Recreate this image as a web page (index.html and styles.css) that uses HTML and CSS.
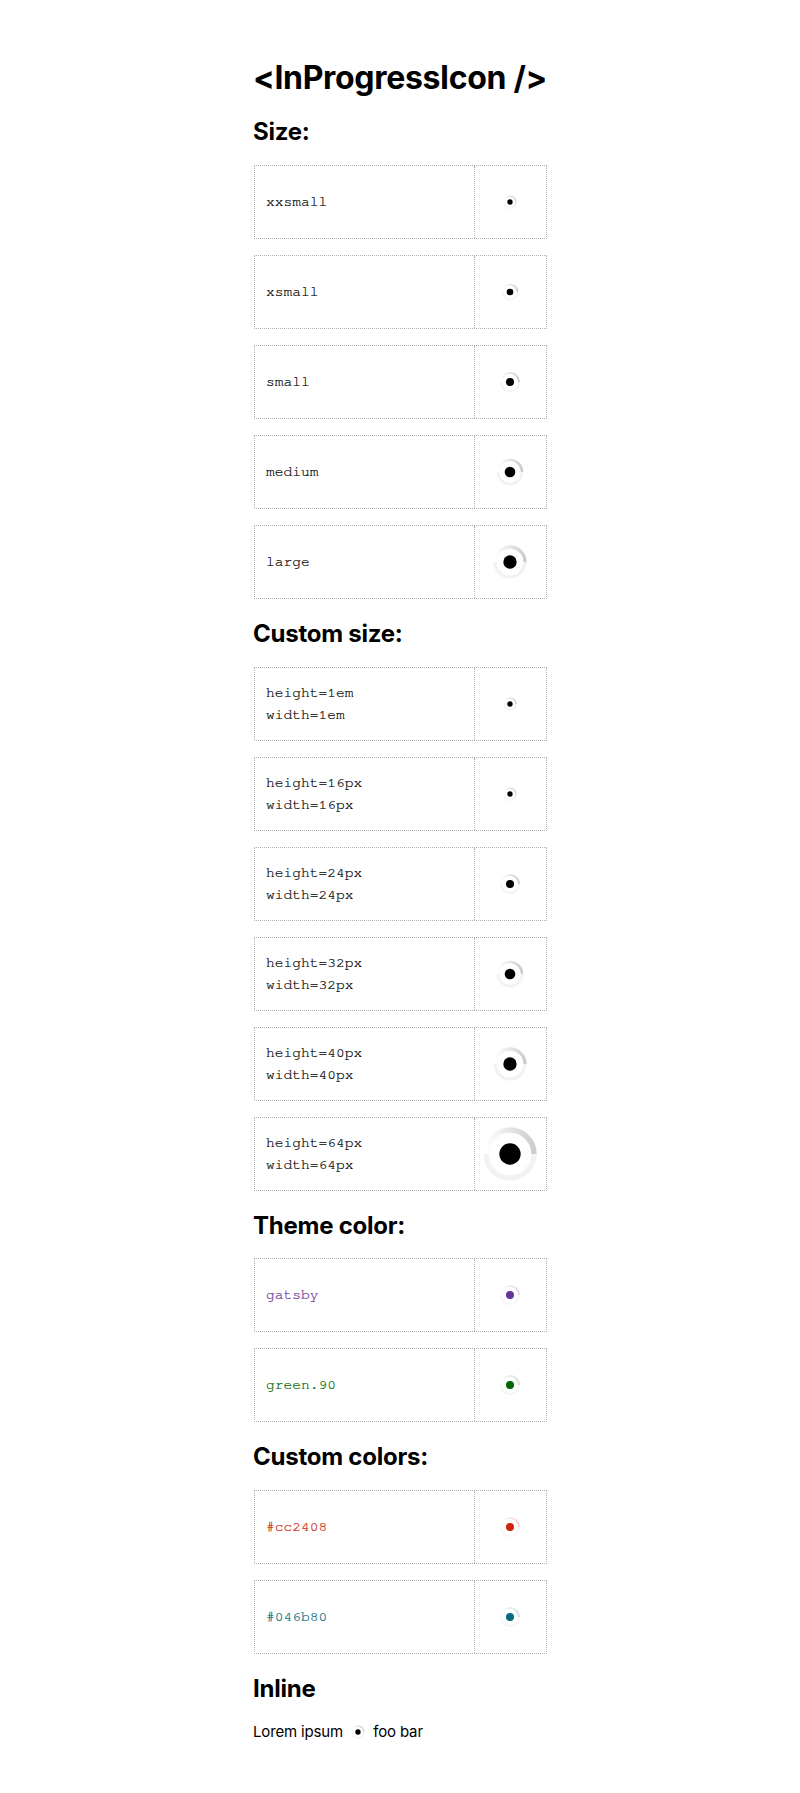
FILE: index.html
```html
<!DOCTYPE html>
<html lang="en">
<head>
<meta charset="utf-8">
<title>InProgressIcon</title>
<link rel="stylesheet" href="styles.css">
</head>
<body>
<svg class="defs" width="0" height="0" aria-hidden="true">
  <defs>
    <linearGradient id="g-black" x1="0" x2="1" y1="0" y2="0"><stop offset="0" stop-color="#000" stop-opacity="0"/><stop offset="1" stop-color="#000" stop-opacity=".2"/></linearGradient>
    <linearGradient id="g-purple" x1="0" x2="1" y1="0" y2="0"><stop offset="0" stop-color="#663399" stop-opacity="0"/><stop offset="1" stop-color="#663399" stop-opacity=".2"/></linearGradient>
    <linearGradient id="g-green" x1="0" x2="1" y1="0" y2="0"><stop offset="0" stop-color="#006500" stop-opacity="0"/><stop offset="1" stop-color="#006500" stop-opacity=".2"/></linearGradient>
    <linearGradient id="g-red" x1="0" x2="1" y1="0" y2="0"><stop offset="0" stop-color="#cc2408" stop-opacity="0"/><stop offset="1" stop-color="#cc2408" stop-opacity=".2"/></linearGradient>
    <linearGradient id="g-blue" x1="0" x2="1" y1="0" y2="0"><stop offset="0" stop-color="#046b80" stop-opacity="0"/><stop offset="1" stop-color="#046b80" stop-opacity=".2"/></linearGradient>
  </defs>
</svg>
<main class="page">
  <h1 class="title">&lt;InProgressIcon /&gt;</h1>

  <h2 class="section">Size:</h2>
  <div class="row"><div class="label">xxsmall</div><div class="cell"><svg class="icon s16" viewBox="0 0 24 24"><path class="low" d="M21 12a9 9 0 0 1-18 0"/><path class="high" stroke="url(#g-black)" d="M3 12a9 9 0 0 1 18 0"/><circle class="dot" cx="12" cy="12" r="4"/></svg></div></div>
  <div class="row"><div class="label">xsmall</div><div class="cell"><svg class="icon s20" viewBox="0 0 24 24"><path class="low" d="M21 12a9 9 0 0 1-18 0"/><path class="high" stroke="url(#g-black)" d="M3 12a9 9 0 0 1 18 0"/><circle class="dot" cx="12" cy="12" r="4"/></svg></div></div>
  <div class="row"><div class="label">small</div><div class="cell"><svg class="icon s24" viewBox="0 0 24 24"><path class="low" d="M21 12a9 9 0 0 1-18 0"/><path class="high" stroke="url(#g-black)" d="M3 12a9 9 0 0 1 18 0"/><circle class="dot" cx="12" cy="12" r="4"/></svg></div></div>
  <div class="row"><div class="label">medium</div><div class="cell"><svg class="icon s32" viewBox="0 0 24 24"><path class="low" d="M21 12a9 9 0 0 1-18 0"/><path class="high" stroke="url(#g-black)" d="M3 12a9 9 0 0 1 18 0"/><circle class="dot" cx="12" cy="12" r="4"/></svg></div></div>
  <div class="row"><div class="label">large</div><div class="cell"><svg class="icon s40" viewBox="0 0 24 24"><path class="low" d="M21 12a9 9 0 0 1-18 0"/><path class="high" stroke="url(#g-black)" d="M3 12a9 9 0 0 1 18 0"/><circle class="dot" cx="12" cy="12" r="4"/></svg></div></div>

  <h2 class="section">Custom size:</h2>
  <div class="row"><div class="label">height=1em<br>width=1em</div><div class="cell"><svg class="icon s16" viewBox="0 0 24 24"><path class="low" d="M21 12a9 9 0 0 1-18 0"/><path class="high" stroke="url(#g-black)" d="M3 12a9 9 0 0 1 18 0"/><circle class="dot" cx="12" cy="12" r="4"/></svg></div></div>
  <div class="row"><div class="label">height=16px<br>width=16px</div><div class="cell"><svg class="icon s16" viewBox="0 0 24 24"><path class="low" d="M21 12a9 9 0 0 1-18 0"/><path class="high" stroke="url(#g-black)" d="M3 12a9 9 0 0 1 18 0"/><circle class="dot" cx="12" cy="12" r="4"/></svg></div></div>
  <div class="row"><div class="label">height=24px<br>width=24px</div><div class="cell"><svg class="icon s24" viewBox="0 0 24 24"><path class="low" d="M21 12a9 9 0 0 1-18 0"/><path class="high" stroke="url(#g-black)" d="M3 12a9 9 0 0 1 18 0"/><circle class="dot" cx="12" cy="12" r="4"/></svg></div></div>
  <div class="row"><div class="label">height=32px<br>width=32px</div><div class="cell"><svg class="icon s32" viewBox="0 0 24 24"><path class="low" d="M21 12a9 9 0 0 1-18 0"/><path class="high" stroke="url(#g-black)" d="M3 12a9 9 0 0 1 18 0"/><circle class="dot" cx="12" cy="12" r="4"/></svg></div></div>
  <div class="row"><div class="label">height=40px<br>width=40px</div><div class="cell"><svg class="icon s40" viewBox="0 0 24 24"><path class="low" d="M21 12a9 9 0 0 1-18 0"/><path class="high" stroke="url(#g-black)" d="M3 12a9 9 0 0 1 18 0"/><circle class="dot" cx="12" cy="12" r="4"/></svg></div></div>
  <div class="row"><div class="label">height=64px<br>width=64px</div><div class="cell"><svg class="icon s64" viewBox="0 0 24 24"><path class="low" d="M21 12a9 9 0 0 1-18 0"/><path class="high" stroke="url(#g-black)" d="M3 12a9 9 0 0 1 18 0"/><circle class="dot" cx="12" cy="12" r="4"/></svg></div></div>

  <h2 class="section">Theme color:</h2>
  <div class="row c-purple"><div class="label">gatsby</div><div class="cell"><svg class="icon s24" viewBox="0 0 24 24"><path class="low" d="M21 12a9 9 0 0 1-18 0"/><path class="high" stroke="url(#g-purple)" d="M3 12a9 9 0 0 1 18 0"/><circle class="dot" cx="12" cy="12" r="4"/></svg></div></div>
  <div class="row c-green"><div class="label">green.90</div><div class="cell"><svg class="icon s24" viewBox="0 0 24 24"><path class="low" d="M21 12a9 9 0 0 1-18 0"/><path class="high" stroke="url(#g-green)" d="M3 12a9 9 0 0 1 18 0"/><circle class="dot" cx="12" cy="12" r="4"/></svg></div></div>

  <h2 class="section">Custom colors:</h2>
  <div class="row c-red"><div class="label">#cc2408</div><div class="cell"><svg class="icon s24" viewBox="0 0 24 24"><path class="low" d="M21 12a9 9 0 0 1-18 0"/><path class="high" stroke="url(#g-red)" d="M3 12a9 9 0 0 1 18 0"/><circle class="dot" cx="12" cy="12" r="4"/></svg></div></div>
  <div class="row c-blue"><div class="label">#046b80</div><div class="cell"><svg class="icon s24" viewBox="0 0 24 24"><path class="low" d="M21 12a9 9 0 0 1-18 0"/><path class="high" stroke="url(#g-blue)" d="M3 12a9 9 0 0 1 18 0"/><circle class="dot" cx="12" cy="12" r="4"/></svg></div></div>

  <h2 class="section">Inline</h2>
  <p class="inline-text">Lorem ipsum <svg class="icon s16 inline-icon" viewBox="0 0 24 24"><path class="low" d="M21 12a9 9 0 0 1-18 0"/><path class="high" stroke="url(#g-black)" d="M3 12a9 9 0 0 1 18 0"/><circle class="dot" cx="12" cy="12" r="4"/></svg> foo bar</p>
</main>
</body>
</html>
```

FILE: styles.css
```css
* { box-sizing: border-box; }
html, body { margin: 0; padding: 0; background: #fff; }
body { font-family: Inter, "Liberation Sans", sans-serif; color: #000; }
.defs { position: absolute; }
.page { width: 293px; margin-left: 254px; padding-top: 59px; }
.title { margin: 0 0 0 -1px; font-size: 32px; line-height: 38.4px; font-weight: 700; letter-spacing: -0.01em; white-space: nowrap; }
.section { margin: 21px 0 17.8px -1px; font-size: 24px; line-height: 28.8px; font-weight: 700; letter-spacing: -0.01em; }
.row { display: grid; grid-template-columns: 219px 72px; height: 74px; margin-bottom: 16px; border: 1px dotted #b0b0b0; }
.label { display: flex; align-items: center; padding-left: 11px; font-family: "Nimbus Mono PS", FreeMono, "Liberation Mono", monospace; font-size: 14.6px; line-height: 21.4px; color: #000; -webkit-text-stroke: 0.2px currentColor; }
.cell { display: flex; align-items: center; justify-content: center; padding-right: 1px; border-left: 1px dotted #b0b0b0; }
.icon { display: block; fill: none; flex: none; }
.low { stroke: currentColor; stroke-opacity: .05; stroke-width: 2; }
.high { stroke-width: 2; }
.dot { fill: currentColor; }
.s16 { width: 16px; height: 16px; }
.s20 { width: 20px; height: 20px; }
.s24 { width: 24px; height: 24px; }
.s32 { width: 32px; height: 32px; }
.s40 { width: 40px; height: 40px; }
.s64 { width: 64px; height: 64px; }
.c-purple .label, .c-purple .cell { color: #663399; }
.c-green .label, .c-green .cell { color: #006500; }
.c-red .label, .c-red .cell { color: #cc2408; }
.c-blue .label, .c-blue .cell { color: #046b80; }
.inline-text { margin: 18px 0 0 -1px; font-size: 15px; line-height: 20px; letter-spacing: -0.01em; }
.inline-icon { display: inline-block; vertical-align: middle; margin: 0 3px; }
```
